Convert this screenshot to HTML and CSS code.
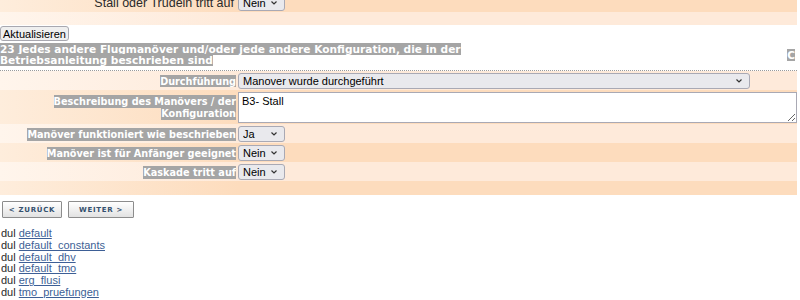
FILE: index.html
```html
<!DOCTYPE html>
<html>
<head>
<meta charset="utf-8">
<link rel="stylesheet" href="styles.css">
</head>
<body>
<div class="page">
  <div class="toprow orange">
    <div class="row-inner">
      <div class="lbl"><span class="plain">Stall oder Trudeln tritt auf</span></div>
      <div class="val"><select class="small"><option>Nein</option></select></div>
    </div>
  </div>
  <div class="spacer light"></div>

  <div class="actions"><button class="btn">Aktualisieren</button></div>

  <div class="heading">
    <div class="title"><span class="tag big">23 Jedes andere Flugmanöver und/oder jede andere Konfiguration, die in der Betriebsanleitung beschrieben sind</span></div>
    <div class="corner"><span class="tag big">C</span></div>
  </div>

  <div class="form">
    <div class="row light">
      <div class="lbl clip"><span class="tag">Durchführung</span></div>
      <div class="val"><select class="wide"><option>Manover wurde durchgeführt</option></select></div>
    </div>
    <div class="row orange tall">
      <div class="lbl"><span class="tag">Beschreibung des Manövers / der Konfiguration</span></div>
      <div class="val"><textarea class="area">B3- Stall</textarea></div>
    </div>
    <div class="row light">
      <div class="lbl"><span class="tag">Manöver funktioniert wie beschrieben</span></div>
      <div class="val"><select class="small"><option>Ja</option></select></div>
    </div>
    <div class="row orange">
      <div class="lbl"><span class="tag">Manöver ist für Anfänger geeignet</span></div>
      <div class="val"><select class="small"><option>Nein</option></select></div>
    </div>
    <div class="row light">
      <div class="lbl"><span class="tag">Kaskade tritt auf</span></div>
      <div class="val"><select class="small"><option>Nein</option></select></div>
    </div>
    <div class="row orange empty"></div>
  </div>

  <div class="nav">
    <button class="navbtn back">&lt; ZURÜCK</button>
    <button class="navbtn next">WEITER &gt;</button>
  </div>

  <ul class="mods">
    <li>dul <a href="#">default</a></li>
    <li>dul <a href="#">default_constants</a></li>
    <li>dul <a href="#">default_dhv</a></li>
    <li>dul <a href="#">default_tmo</a></li>
    <li>dul <a href="#">erg_flusi</a></li>
    <li>dul <a href="#">tmo_pruefungen</a></li>
  </ul>
</div>
</body>
</html>
```

FILE: styles.css
```css
html, body {
  margin: 0;
  padding: 0;
  background: #ffffff;
  overflow: hidden;
}
body {
  font-family: "Liberation Sans", Arial, sans-serif;
  font-size: 11px;
  color: #000;
}
.page {
  width: 797px;
}
.orange {
  background: linear-gradient(to right, #feeddc 0%, #fddcbd 30%, #fddcbd 100%);
}
.light {
  background: linear-gradient(to right, #fff5ec 0%, #feeada 30%, #feeada 100%);
}
.toprow {
  height: 12px;
  overflow: hidden;
}
.toprow .row-inner {
  display: grid;
  grid-template-columns: 236px 1fr;
  margin-top: -7px;
  height: 19px;
  align-items: center;
}
.plain {
  font-family: "Liberation Sans", Arial, sans-serif;
  font-size: 12.5px;
  color: #2a2a2a;
  padding-right: 2px;
}
.spacer {
  height: 13px;
}
.tag {
  background: #a5a5a5;
  color: #ffffff;
  font-family: "DejaVu Sans", Verdana, sans-serif;
  font-weight: bold;
  font-size: 9.7px;
  line-height: 11px;
  padding: 1px 0;
}
.tag.big {
  font-size: 10.6px;
  padding: 0;
}
.actions {
  padding: 1px 0 0 0;
  height: 17px;
}
.btn {
  font-family: "Liberation Sans", Arial, sans-serif;
  font-size: 11px;
  height: 15px;
  padding: 0 2px 0 2px;
  margin: 0;
  background: #efefef;
  border: 1px solid #a8a8b0;
  border-radius: 3px;
  color: #000;
  line-height: 12px;
}
.heading {
  margin-top: 1px;
  display: flex;
  align-items: center;
  justify-content: space-between;
  border-bottom: 1px dotted #9a9a9a;
  padding-bottom: 4px;
}
.title {
  width: 475px;
  line-height: 11px;
}
.corner {
  padding-right: 2px;
}
.form {
  display: flex;
  flex-direction: column;
}
.row {
  display: grid;
  grid-template-columns: 236px 1fr;
  align-items: center;
  height: 19px;
}
.row.tall {
  height: 34px;
}
.row.empty {
  height: 14px;
}
.lbl {
  text-align: right;
  line-height: 12px;
}
.lbl.clip {
  overflow: hidden;
  white-space: nowrap;
}
.val {
  padding-left: 2px;
  display: flex;
  align-items: center;
}
select {
  appearance: none;
  -webkit-appearance: none;
  font-family: "Liberation Sans", Arial, sans-serif;
  font-size: 11px;
  height: 16px;
  line-height: 14px;
  background-color: #e9e9ed;
  background-image: url("data:image/svg+xml;utf8,<svg xmlns='http://www.w3.org/2000/svg' width='8' height='6' viewBox='0 0 8 6'><path d='M1.5 1.5 L4 4 L6.5 1.5' fill='none' stroke='%23333' stroke-width='1.2'/></svg>");
  background-repeat: no-repeat;
  background-position: right 6px center;
  border: 1px solid #a9a9b4;
  border-radius: 3px;
  padding: 0 0 0 4px;
  color: #000;
  box-sizing: border-box;
}
select.wide {
  width: 512px;
}
select.small {
  width: 47px;
}
.area {
  width: 559px;
  height: 31px;
  box-sizing: border-box;
  font-family: "Liberation Sans", Arial, sans-serif;
  font-size: 11px;
  border: 1px solid #a9a9b4;
  padding: 2px 3px;
  margin: 0;
  resize: both;
  background: #fff;
}
.nav {
  margin-top: 6px;
  display: flex;
  gap: 6px;
  padding-left: 2px;
}
.navbtn {
  height: 17px;
  padding: 0;
  margin: 0;
  border: 1px solid #8c8c8c;
  border-radius: 1px;
  background: linear-gradient(#ffffff, #e2e2e2);
  font-family: "DejaVu Sans", Verdana, sans-serif;
  font-weight: bold;
  font-size: 7px;
  letter-spacing: 0.7px;
  color: #34506e;
}
.navbtn.back {
  width: 60px;
}
.navbtn.next {
  width: 66px;
}
.mods {
  list-style: none;
  margin: 10px 0 0 1px;
  padding: 0;
  font-family: "Liberation Sans", Arial, sans-serif;
  font-size: 11px;
  line-height: 11.8px;
  color: #2a2a2a;
}
.mods a {
  color: #3d5f96;
  text-decoration: underline;
}
```
